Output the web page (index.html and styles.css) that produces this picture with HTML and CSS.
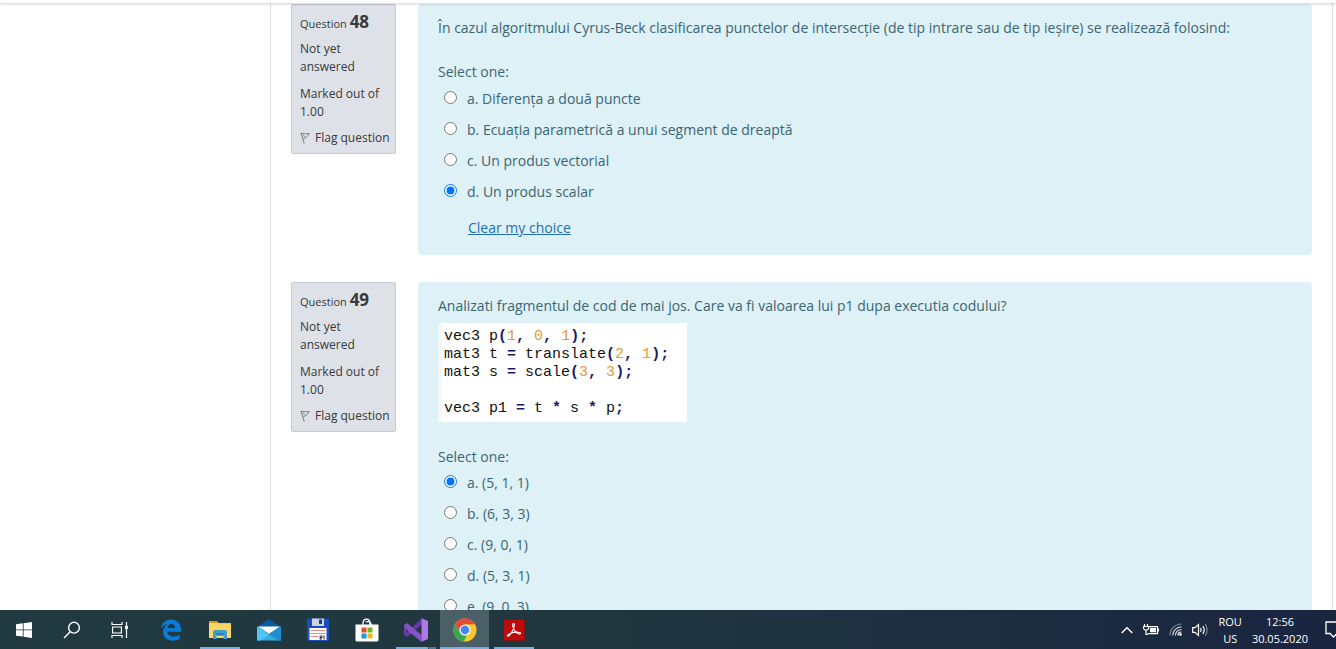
FILE: index.html
```html
<!DOCTYPE html>
<html lang="ro">
<head>
<meta charset="utf-8">
<meta name="viewport" content="width=device-width, initial-scale=1">
<title>Quiz</title>
<link rel="stylesheet" href="styles.css">
</head>
<body>
<header class="topbar"></header>
<main class="viewport">
  <div class="region">
    <section class="question">
      <aside class="info">
        <h3 class="info-no">Question <span class="qno">48</span></h3>
        <p class="info-text">Not yet answered</p>
        <p class="info-text">Marked out of 1.00</p>
        <button type="button" class="flag"><svg class="flag-icon" viewBox="0 0 10 12" width="10" height="12"><path d="M1 1 4.200 11.500M.5 1.700C4 .5 5 2.700 9.300 1.500 8 3 7.500 5.500 3.500 6.500M3.300 2.700 4.500 5" /></svg>Flag question</button>
      </aside>
      <form class="formulation">
        <p class="qtext">În cazul algoritmului Cyrus-Beck clasificarea punctelor de intersecție (de tip intrare sau de tip ieșire) se realizează folosind:</p>
        <fieldset class="answers answers-spaced">
          <legend class="prompt">Select one:</legend>
          <div class="option"><input type="radio" name="q48" id="q48a"><label for="q48a">a. Diferența a două puncte</label></div>
          <div class="option"><input type="radio" name="q48" id="q48b"><label for="q48b">b. Ecuația parametrică a unui segment de dreaptă</label></div>
          <div class="option"><input type="radio" name="q48" id="q48c"><label for="q48c">c. Un produs vectorial</label></div>
          <div class="option"><input type="radio" name="q48" id="q48d" checked><label for="q48d">d. Un produs scalar</label></div>
        </fieldset>
        <a class="clear" href="#">Clear my choice</a>
      </form>
    </section>

    <section class="question">
      <aside class="info">
        <h3 class="info-no">Question <span class="qno">49</span></h3>
        <p class="info-text">Not yet answered</p>
        <p class="info-text">Marked out of 1.00</p>
        <button type="button" class="flag"><svg class="flag-icon" viewBox="0 0 10 12" width="10" height="12"><path d="M1 1 4.200 11.500M.5 1.700C4 .5 5 2.700 9.300 1.500 8 3 7.500 5.500 3.500 6.500M3.300 2.700 4.500 5" /></svg>Flag question</button>
      </aside>
      <form class="formulation">
        <p class="qtext">Analizati fragmentul de cod de mai jos. Care va fi valoarea lui p1 dupa executia codului?</p>
        <pre class="code">vec3 p<b>(</b><i>1</i><b>,</b> <i>0</i><b>,</b> <i>1</i><b>);</b>
mat3 t <b>=</b> translate<b>(</b><i>2</i><b>,</b> <i>1</i><b>);</b>
mat3 s <b>=</b> scale<b>(</b><i>3</i><b>,</b> <i>3</i><b>);</b>

vec3 p1 <b>=</b> t <b>*</b> s <b>*</b> p<b>;</b></pre>
        <fieldset class="answers answers-code">
          <legend class="prompt">Select one:</legend>
          <div class="option"><input type="radio" name="q49" id="q49a" checked><label for="q49a">a. (5, 1, 1)</label></div>
          <div class="option"><input type="radio" name="q49" id="q49b"><label for="q49b">b. (6, 3, 3)</label></div>
          <div class="option"><input type="radio" name="q49" id="q49c"><label for="q49c">c. (9, 0, 1)</label></div>
          <div class="option"><input type="radio" name="q49" id="q49d"><label for="q49d">d. (5, 3, 1)</label></div>
          <div class="option"><input type="radio" name="q49" id="q49e"><label for="q49e">e. (9, 0, 3)</label></div>
        </fieldset>
      </form>
    </section>
  </div>
</main>

<footer class="taskbar">
  <nav class="system">
    <button type="button" class="task" aria-label="Start"><svg viewBox="0 0 16 16" width="16" height="16"><path fill="#fff" d="M0 2.3 6.8 1.3V7.5H0zM7.6 1.2 16 0V7.5H7.6zM0 8.3H6.8V14.6L0 13.7zM7.6 8.3H16V16L7.6 14.8z"/></svg></button>
    <button type="button" class="task" aria-label="Search"><svg viewBox="0 0 18 18" width="18" height="18" fill="none" stroke="#fff" stroke-width="1.4"><circle cx="11" cy="6.7" r="5.4"/><path d="M7.2 10.8 1 17"/></svg></button>
    <button type="button" class="task" aria-label="Task View"><svg viewBox="0 0 18 16" width="18" height="16" fill="none" stroke="#fff" stroke-width="1.2"><path d="M1 0V2.5H11V0M1 16V13.5H11V16M15.5 0V16"/><path d="M1.6 5H10.4V11H1.6z"/><path fill="#fff" stroke="none" d="M14 4h3v3h-3z"/></svg></button>
  </nav>
  <nav class="apps">
    <button type="button" class="task" aria-label="Edge"><svg viewBox="0 0 22 22" width="22" height="22"><path fill="#0b7bd8" d="M1 9.6C1.6 4.2 5.8 0.5 11.1.5c6.200 0 9.900 4.400 9.900 10v2.200H7.300c.2 3.200 3 4.800 6.400 4.800 2.400 0 4.400-.7 6-1.700v4.300c-1.800 1-4.200 1.600-6.800 1.600C7 21.700 3 18.200 3 13c0-3.300 1.700-6.200 4.600-7.800C4.900 5.700 2.400 7.300 1 9.600zM7.500 9h7.600c0-2.500-1.300-4-3.600-4-2.200 0-3.700 1.600-4 4z"/></svg></button>
    <button type="button" class="task open" aria-label="File Explorer"><svg viewBox="0 0 22 20" width="22" height="20"><path fill="#d99a12" d="M0 1h8l2 2.500H0z"/><path fill="#fbd667" d="M0 3h22v15H0z"/><path fill="#f1c34c" d="M10 3h12v1.200H10z"/><path fill="#3f9bd0" d="M4 19v-7q0-2 2-2h10q2 0 2 2v7h-3.500v-3.500h-7V19z"/><path fill="#2882b8" d="M7.500 13h7v2.500h-7z"/></svg></button>
    <button type="button" class="task" aria-label="Mail"><svg viewBox="0 0 24 22" width="24" height="22"><path fill="#0c5aa3" d="M0 8 12 0l12 8v5H0z"/><path fill="#f5fbff" d="M1 7.500h22L12 15z"/><path fill="#35aee8" d="M0 7.500 12 15.500 24 7.500V21.500H0z"/><path fill="#52c4f5" d="M0 7.500 12 15.500 3 21.500H0z"/><path fill="#1c8fd3" d="M12 15.500 24 7.500V21.500H21z"/></svg></button>
    <button type="button" class="task" aria-label="Total Commander"><svg viewBox="0 0 24 24" width="24" height="24"><path fill="#1d4cbf" d="M1 .5h22V23H2.500L1 21.500z"/><path fill="#c9d4dc" d="M6 .5h12V8H6z"/><path fill="#203b92" d="M13 1.500h3V6h-3z"/><path fill="#fff" d="M3.500 10h17v12h-17z"/><path stroke="#e58b83" d="M4.500 12.500h15M4.500 15.500h15M4.500 18.500h8"/><path fill="none" stroke="#222" d="M13.500 18h2.500v1.500h-2v1.500h2M18 17.500v4"/></svg></button>
    <button type="button" class="task" aria-label="Microsoft Store"><svg viewBox="0 0 24 24" width="24" height="24"><path fill="none" stroke="#fff" stroke-width="1.300" d="M8 8V5.500Q8 1.200 11.500 1.200T15 5.500V8M10.500 4Q15.500 2.500 16.500 7"/><path fill="#fff" d="M.5 6.500h23V22q0 1.500-1.500 1.500H2Q.5 23.500.5 22z"/><path fill="#e74c25" d="M6.500 9.500h5v5h-5z"/><path fill="#72b420" d="M12.500 9.500h5v5h-5z"/><path fill="#189bdc" d="M6.500 15.500h5v5h-5z"/><path fill="#f7b51c" d="M12.500 15.500h5v5h-5z"/></svg></button>
    <button type="button" class="task open multi" aria-label="Visual Studio"><svg viewBox="0 0 24 24" width="24" height="24"><path fill="#6c35ac" d="M0 17 17.500.5V7L3 19z"/><path fill="#8752c8" d="M0 7 3 5 17.500 17V24L0 9.500z"/><path fill="#7440b8" d="M0 7 2.300 9V15L0 17z"/><path fill="#ac7ae2" d="M17.500.3 24 3V21L17.500 23.800z"/></svg></button>
    <button type="button" class="task open active" aria-label="Chrome"><svg viewBox="0 0 24 24" width="24" height="24"><circle cx="12" cy="12" r="11.500" fill="#fbc829"/><path fill="#e44b3b" d="M2.040 6.250A11.500 11.500 0 0 1 21.960 6.250H12L7 14.900z"/><path fill="#35a853" d="M2.040 6.250 7.020 14.870 12 17.750 14 17 10.800 23.440A11.500 11.500 0 0 1 2.040 6.250z"/><circle cx="12" cy="12" r="5.600" fill="#fff"/><circle cx="12" cy="12" r="4.400" fill="#4586f1"/></svg></button>
    <button type="button" class="task open" aria-label="Adobe Reader"><svg viewBox="0 0 22 22" width="22" height="22"><path fill="#bd0a0a" stroke="#7d1313" d="M.5.500h21v21H.5z"/><path fill="none" stroke="#fff" stroke-width="1.100" d="M10.700 4.500C9.200 4 9.500 7.500 11 10.500c1.800 3.500 5.200 5.500 6.300 4.200 1.300-1.700-4.600-2-8.100-1-3 .9-5.200 2.400-4.700 3.300.9 1.200 3.800-2.500 5.300-5.800 1.300-3 2.300-6.300.9-6.700z"/></svg></button>
  </nav>
  <div class="tray">
    <svg viewBox="0 0 12 8" width="12" height="8" fill="none" stroke="#fff" stroke-width="1.400"><path d="M.7 7 6 1.700 11.300 7"/></svg>
    <svg viewBox="0 0 16 12" width="16" height="12"><path fill="none" stroke="#fff" stroke-width="1.200" d="M5.500 2.600h9v7H4.600M1.500 0v2.500M4.500 0v2.500M.5 2.500h5v2.200L4 6H2L.5 4.700zM3 6v4.500h2"/><path fill="#fff" d="M7 4h6v4.200H7zM14.500 4.500H16v3h-1.500z"/></svg>
    <svg viewBox="0 0 13 13" width="13" height="13" fill="none" stroke-width="1.200"><path stroke="#7d879a" d="M1 12.500A11.500 11.500 0 0 1 12.500 1"/><path stroke="#cdd2da" d="M3.700 12.500A8.800 8.800 0 0 1 12.500 3.800M6.400 12.500A6 6 0 0 1 12.500 6.500"/><path stroke="#fff" d="M9 12.500A3.500 3.500 0 0 1 12.500 9"/><circle cx="11.500" cy="11.500" r="1.300" fill="#fff"/></svg>
    <svg viewBox="0 0 17 14" width="17" height="14" fill="none" stroke="#fff" stroke-width="1.200"><path d="M.7 4.700H3L6.500 1.500v11L3 9.300H.7z"/><path d="M8.500 5Q10 7 8.500 9M10.800 3Q13.600 7 10.800 11"/><path stroke="#7d879a" d="M13.200 1Q17 7 13.200 13"/></svg>
    <div class="stack"><span>ROU</span><span>US</span></div>
    <div class="stack"><time>12:56</time><time>30.05.2020</time></div>
    <svg class="notify" viewBox="0 0 11 17" width="11" height="17" fill="none" stroke="#fff" stroke-width="1.300"><path d="M12 1H1V12.500H5L8.500 16 12 12.500"/></svg>
  </div>
</footer>
</body>
</html>
```
FILE: styles.css
```css
* { box-sizing: border-box; }

body {
  margin: 0;
  height: 100vh;
  display: flex;
  flex-direction: column;
  overflow: hidden;
  background: #fff;
  font: 14px/22px "Open Sans", "Noto Sans", sans-serif;
  color: #3b6572;
}

p, h3 { margin: 0; }

button {
  border: 0;
  padding: 0;
  background: none;
  font: inherit;
  color: inherit;
}

.topbar {
  flex: none;
  height: 3px;
  background: #fff;
  box-shadow: 0 1px 3px rgba(0, 0, 0, 0.2);
  z-index: 1;
}

.viewport {
  flex: 1;
  min-height: 0;
  overflow: hidden;
}

.region {
  min-height: 100%;
  margin: 0 3px 0 270px;
  padding: 1px 20px 0;
  border: solid #dcdfe2;
  border-width: 0 1px;
}

.question {
  display: flex;
  align-items: flex-start;
  gap: 22px;
  margin-bottom: 27px;
}

.info {
  flex: none;
  width: 105px;
  padding: 7px 8px;
  border: 1px solid #c6cad0;
  border-radius: 2px;
  background: #dee1e7;
  color: #373a3c;
  font-size: 12px;
  line-height: 18px;
}

.info-no {
  margin-bottom: 6px;
  font-size: 11px;
  font-weight: 400;
  line-height: 20px;
}

.qno {
  font-size: 17px;
  font-weight: 700;
}

.info-text { margin-bottom: 9px; }

.flag {
  display: flex;
  align-items: center;
  gap: 5px;
  line-height: 16px;
  white-space: nowrap;
}

.flag-icon {
  fill: none;
  stroke: #777b80;
}

.formulation {
  flex: 1;
  min-width: 0;
  padding: 13px 20px 16px;
  border-radius: 4px;
  background: #def1f7;
}

.answers {
  margin: 0;
  padding: 0;
  border: 0;
}

.answers-spaced { margin-top: 22px; }
.answers-code { margin-top: 24px; }

.prompt { padding: 0; }
.answers-code .prompt { margin-bottom: -1px; }

.option {
  display: flex;
  align-items: center;
  gap: 10px;
  height: 31px;
  padding-left: 6px;
}

.option input {
  width: 13px;
  height: 13px;
  margin: 0 0 2px;
}

.clear {
  display: inline-block;
  margin: 10px 0 0 30px;
  color: #1f6fb2;
}

.code {
  width: 249px;
  max-width: 100%;
  margin: 6px 0 0;
  padding: 5px 2px 4px;
  border-left: 4px solid #f3f9fb;
  background: #fff;
  color: #111;
  font: 15px/18px "Liberation Mono", monospace;
}

.code i {
  color: #e39a3b;
  font-style: normal;
}

.code b { color: #17176b; }

.taskbar {
  flex: none;
  display: flex;
  height: 39px;
  background: linear-gradient(90deg, #213940, #20373f 45%, #1a2540);
  color: #fff;
  font-size: 11px;
  line-height: 17px;
}

.system, .apps { display: flex; }
.system { margin-right: 2px; }

.task {
  display: flex;
  align-items: center;
  justify-content: center;
  width: 48px;
  border-bottom: 2px solid transparent;
}

.task svg { margin-top: 2px; }

.apps .task { width: 49px; }

.open {
  background: linear-gradient(#76aee3, #76aee3) center bottom / 40px 2px no-repeat border-box;
}

.active {
  background: linear-gradient(#76aee3, #76aee3) center bottom / 49px 2px no-repeat border-box, #4b5f66;
}

.multi {
  background-image: linear-gradient(90deg, #76aee3 32px, #354f5d 32px, #354f5d 33px, #527a9f 33px);
}

.tray {
  display: flex;
  align-items: center;
  gap: 10px;
  margin-left: auto;
}

.stack {
  display: flex;
  flex-direction: column;
  align-items: center;
}

.notify { margin-left: 7px; }
```
